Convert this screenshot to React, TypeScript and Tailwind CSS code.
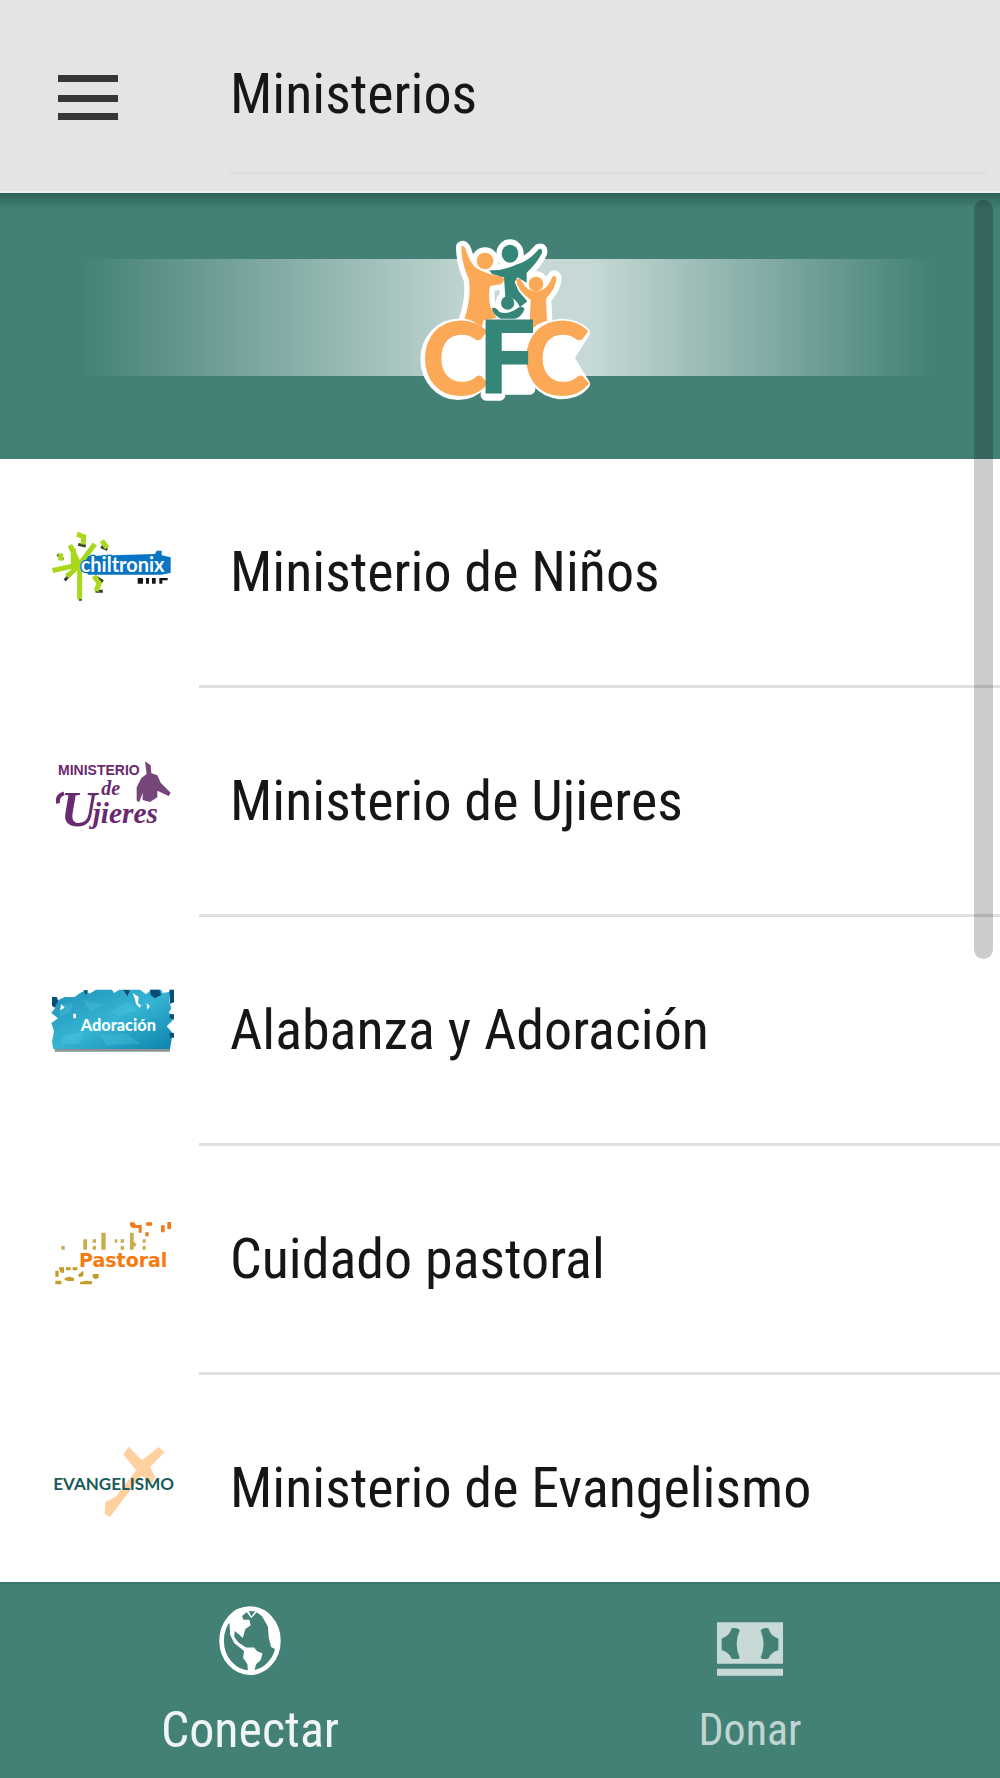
import type { ReactNode } from 'react';

function ChiltronixLogo() {
  return (
    <svg viewBox="0 -3 450 270" className="w-[150px] h-[90px]" aria-hidden="true">
      <g fill="none" strokeLinecap="square">
        <g stroke="#33402f" strokeWidth="9">
          <path d="M104 150L77 178M121 200V238M168 172L185 182M171 214H184M56 106L66 116M187 82L198 87M119 74L133 77" />
        </g>
        <g stroke="#a8d81c" strokeWidth="15">
          <path d="M118 134L93 82M118 134L45 150M118 134L160 78M118 134L101 152L86 164M119 140V230M118 45L131 50L130 66M190 68L197 78M166 174L178 190L171 206M62 108V114M100 92V126" />
        </g>
      </g>
      <path d="M125 140L145 108L345 102L350 92H365V106L392 112V158L365 164H145Z" fill="#0874c4" />
      <text x="122" y="155" fontSize="60" fontWeight="700" fill="#fff" fontFamily="Lato, sans-serif" stroke="#0874c4" strokeWidth="8" paintOrder="stroke">chiltronix</text>
      <path d="M293 174H309V191H293ZM318 174H327V191H318ZM336 174H347V191H336ZM358 174H383V181H367V191H358Z" fill="#15151a" />
    </svg>
  );
}

function UjieresLogo() {
  return (
    <svg viewBox="0 -6 450 270" className="w-[150px] h-[90px]" aria-hidden="true">
      <g fill="#6a2a70" fontFamily="Liberation Serif, serif" fontWeight="700">
        <text x="54" y="74" fontSize="42" fontFamily="Liberation Sans, sans-serif">MINISTERIO</text>
        <text x="184" y="136" fontSize="60" fontStyle="italic">de</text>
        <text x="62" y="228" fontSize="150" fontStyle="italic">U</text>
        <text x="158" y="218" fontSize="88" fontStyle="italic">jieres</text>
      </g>
      <path d="M72 130Q50 136 54 160" fill="none" stroke="#6a2a70" strokeWidth="12" />
      <path d="M315 34L332 46L334 70L352 76L362 98L392 128L386 138L352 122V142L330 156L308 150V128L298 156L290 152V112L304 84L320 72Z" fill="#76457a" />
    </svg>
  );
}

function AdoracionLogo() {
  return (
    <svg viewBox="0 6 450 270" className="w-[150px] h-[90px]" aria-hidden="true">
      <defs>
        <linearGradient id="paint" x1="0" y1="0" x2="1" y2="1">
          <stop offset="0" stopColor="#1f91b8" />
          <stop offset="0.5" stopColor="#36b4d3" />
          <stop offset="1" stopColor="#0d83ad" />
        </linearGradient>
      </defs>
      <path d="M44 222H390V230H44Z" fill="#8c9396" />
      <path d="M36 66H50L54 76L74 66H104L120 54L138 46L148 56L168 44H216L222 54L238 44H300L318 58L334 44H364L368 54L390 50L388 80L394 100L386 114L400 120L398 136L380 154L398 174L390 222H40L36 202L42 168L34 144L54 130L34 114L46 98Z" fill="url(#paint)" />
      <path d="M36 66H50L54 78L44 98L36 92ZM130 46H144L138 60ZM330 44H358L364 60L344 70L332 60ZM388 44H402V82L390 86ZM250 44L270 46L262 64ZM388 174H402V188H390ZM390 118H402V134L388 128Z" fill="#0a4d76" />
      <path d="M60 90L100 84L90 114L60 124ZM130 76L190 90L150 110ZM210 110L260 80L290 106L240 122ZM70 180L130 170L120 206L64 206ZM180 180L260 176L300 206L200 210Z" fill="#5bcbe0" opacity="0.3" />
      <path d="M278 54L296 66L294 84L304 92L298 98L288 86L284 70ZM64 88L74 98L60 106ZM100 116H108V130H100ZM320 84L330 94L322 104Z" fill="#fff" />
      <text x="122" y="168" fontSize="49" fontWeight="900" fill="#f4feff" fontFamily="Lato, sans-serif">Adoración</text>
    </svg>
  );
}

function PastoralLogo() {
  return (
    <svg viewBox="0 -12 450 270" className="w-[150px] h-[90px]" aria-hidden="true">
      <path d="M64 108H74V119H64ZM130 88H141V119H130ZM158 88H168V98H158ZM158 108H168V119H158ZM184 68H197V119H184ZM224 88H232V98H224ZM242 88H252V98H242ZM242 108H252V119H242ZM270 68H281V94L290 104L281 112V119H270ZM308 88H317V98H308ZM308 108H317V119H308Z" fill="#c9ac4d" />
      <path d="M46 182H56V200H46ZM56 172H72V188H62ZM78 172H92V181H78ZM98 172H112V181H98ZM114 194L130 182V198L118 202ZM158 192H176V204L166 208L158 202ZM74 204L88 200L102 204V212L88 214L74 210ZM46 212H64V223H46ZM120 216L138 212L156 214V223H120Z" fill="#c29c2b" />
      <path d="M270 37H282L288 45H305V68H296V54H278L270 48ZM318 37H336V47H318ZM316 67H326V79H316ZM363 46H374V67H363ZM382 36H393V57H382Z" fill="#f07a1c" />
      <text x="117" y="171" fontSize="57" fontWeight="700" fill="#f77a11" fontFamily="DejaVu Sans, sans-serif">Pastoral</text>
    </svg>
  );
}

function EvangelismoLogo() {
  return (
    <svg viewBox="0 0 450 270" className="w-[150px] h-[90px]" aria-hidden="true">
      <path d="M266 35L306 76L356 36L374 52L330 96L346 126L336 144L304 122L210 246L194 236L196 202L228 184L288 106L250 58Z" fill="#ffd1a1" />
      <text x="40" y="165" fontSize="51" fontWeight="700" fill="#195b59" fontFamily="Lato, sans-serif">EVANGELISMO</text>
    </svg>
  );
}

function CfcLogo() {
  return (
    <svg viewBox="0 0 630 570" className="relative w-[210px] h-[190px] overflow-visible" role="img" aria-label="CFC">
      <defs>
        <g id="people-left">
          <circle cx="255" cy="123" r="25" />
          <path d="M184 80Q192 74 198 90Q207 123 226 142Q254 163 306 169Q320 180 302 193L270 198Q264 226 271 260L290 294L252 300L244 322Q222 300 193 296Q214 240 207 178Q184 130 184 80Z" />
        </g>
        <g id="people-right">
          <circle cx="408" cy="192" r="22" />
          <path d="M348 178Q360 172 368 188Q378 210 408 214Q438 214 454 178Q460 160 469 172Q470 202 438 236L441 302Q410 310 388 334L392 240Q352 212 348 178Z" />
        </g>
        <g id="people-center">
          <ellipse cx="330" cy="101" rx="25" ry="27" />
          <path d="M268 151Q310 152 348 134Q386 124 416 88Q428 82 426 98Q414 126 380 158L380 188L352 172L344 186L356 214L382 244L360 262Q348 238 332 232H316L312 172L276 162Z" />
          <circle cx="323" cy="249" r="20" />
          <path d="M276 264Q288 260 298 276Q324 286 350 266Q364 254 374 266Q364 292 344 296H302Q278 284 276 264Z" />
        </g>
      </defs>
      <g fill="#fff" stroke="#fff" strokeWidth="32" strokeLinejoin="round">
        <use href="#people-left" />
        <use href="#people-right" />
        <use href="#people-center" />
        <ellipse cx="175" cy="418" rx="98" ry="106" />
        <path d="M258 310H390V508H300V526H258Z" />
        <path d="M480 312Q530 312 554 338L506 414L554 492Q530 522 480 522Q394 510 394 418Q394 324 480 312Z" />
      </g>
      <g fill="#fba957">
        <use href="#people-left" />
        <use href="#people-right" />
      </g>
      <use href="#people-center" fill="#358578" />
      <g fontFamily="Lato, sans-serif" fontWeight="700" fontSize="292" strokeWidth="9">
        <text x="68" y="522" fill="#fba957" stroke="#fba957">C</text>
        <text x="372" y="522" fill="#fba957" stroke="#fba957">C</text>
        <text x="238" y="516" fill="#358578" stroke="#358578">F</text>
      </g>
    </svg>
  );
}

function GlobeIcon() {
  return (
    <svg viewBox="230 108 192 212" className="w-16 h-[70px]" aria-hidden="true">
      <ellipse cx="326" cy="213" rx="86" ry="97" fill="none" stroke="#fff" strokeWidth="14" />
      <path d="M248 166L262 138L285 118L318 113L330 140L342 124L352 116L388 136L410 176L414 215L404 240L390 232L383 205L380 170L362 138L346 127L330 145L316 127L302 138L306 150L324 150L328 166L312 178L304 205L290 192L280 184L278 200L290 218L314 234H338L348 245L364 252L358 272L345 284L338 306H320L318 284L305 265L308 244L278 220L266 196L264 160Z" fill="#fff" />
    </svg>
  );
}

function MoneyIcon() {
  return (
    <svg viewBox="0 0 200 162" className="w-[66px] h-[54px]" fill="#c8dad7" aria-hidden="true">
      <path fillRule="evenodd" d="M0 0H200V126H0ZM44 18Q64 16 69 24Q50 66 69 108Q62 114 44 110Q40 98 28 90L14 84V50L28 42Q40 34 44 18ZM132 24Q140 16 156 18Q160 34 172 42L186 50V84L172 90Q160 98 156 110Q138 114 132 108Q150 66 132 24Z" />
      <path d="M0 141H200V162H0Z" />
    </svg>
  );
}

const ministries: { name: string; logo: ReactNode }[] = [
  { name: 'Ministerio de Niños', logo: <ChiltronixLogo /> },
  { name: 'Ministerio de Ujieres', logo: <UjieresLogo /> },
  { name: 'Alabanza y Adoración', logo: <AdoracionLogo /> },
  { name: 'Cuidado pastoral', logo: <PastoralLogo /> },
  { name: 'Ministerio de Evangelismo', logo: <EvangelismoLogo /> },
];

export default function App() {
  return (
    <div className="h-screen flex flex-col bg-white text-[#161616] font-['Roboto_Condensed',Roboto,sans-serif]">
      {/* Header */}
      <header className="shrink-0 h-[193px] flex bg-[#e4e4e4] border-b-2 border-[#eeecec]">
        <div className="w-[230px] shrink-0 pl-[58px] pt-[74px]">
          <button type="button" aria-label="Menú" className="block">
            <svg viewBox="0 0 60 48" className="w-[60px] h-12" fill="#363636" aria-hidden="true">
              <path d="M0 1H60V8H0ZM0 21H60V28H0ZM0 39H60V46H0Z" />
            </svg>
          </button>
        </div>
        <div className="flex-1 mr-3.5 h-[175px] flex items-center border-b-3 border-[#dedede]">
          <h1 className="text-[56px] leading-16 pt-4">Ministerios</h1>
        </div>
      </header>

      {/* Scrolling list */}
      <main className="relative flex-1 min-h-0 overflow-hidden">
        <div className="relative h-[266px] flex justify-center bg-[#438177] pt-[27px] pl-2.5">
          <div className="absolute inset-x-0 top-0 h-4 bg-gradient-to-b from-[#2d6259] to-transparent"></div>
          <div className="absolute left-[80px] right-[70px] top-[66px] h-[117px] bg-[linear-gradient(to_right,transparent,rgba(255,255,255,0.7)_48%,rgba(255,255,255,0.7)_60%,transparent)]"></div>
          <CfcLogo />
        </div>

        <ul>
          {ministries.map((ministry) => (
            <li key={ministry.name}>
              <a href="#" className="flex h-[229px]">
                <span className="w-[199px] shrink-0 pl-10 pt-15">{ministry.logo}</span>
                <span className="flex-1 flex items-center pl-[31px] border-b-3 border-[#e0e0e0] text-[56px] leading-16">
                  {ministry.name}
                </span>
              </a>
            </li>
          ))}
        </ul>

        <div className="absolute right-[7px] top-[7px] w-[19px] h-[759px] rounded-full bg-black/20"></div>
      </main>

      {/* Bottom tabs */}
      <nav className="shrink-0 h-[196px] grid grid-cols-2 bg-[#438177] border-t-2 border-[#38776d]">
        <a href="#" className="flex flex-col items-center justify-end pb-4 text-[#eef5f4]">
          <GlobeIcon />
          <span className="text-[50px] leading-16 mt-[22px]">Conectar</span>
        </a>
        <a href="#" className="flex flex-col items-center justify-end pb-4 text-[#c0d5d1]">
          <MoneyIcon />
          <span className="text-[44px] leading-16 mt-[22px]">Donar</span>
        </a>
      </nav>
    </div>
  );
}
